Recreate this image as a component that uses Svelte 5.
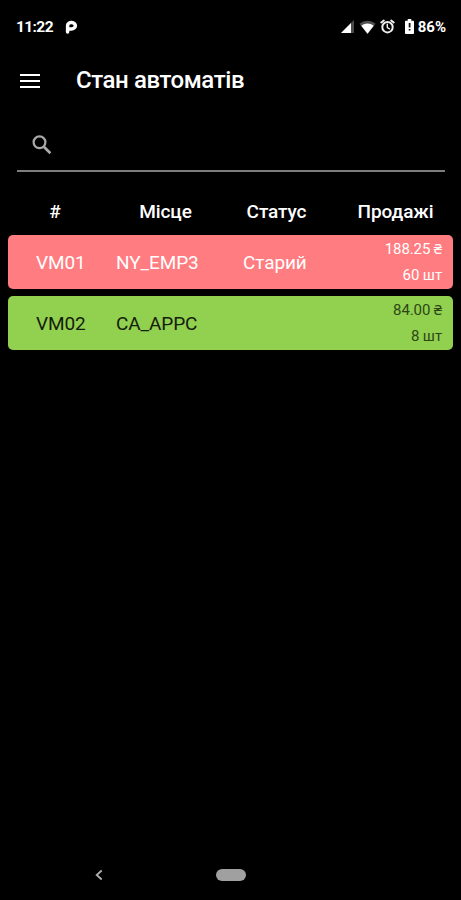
<script>
  let search = $state('');

  const columns = ['#', 'Місце', 'Статус', 'Продажі'];

  const machines = [
    { id: 'VM01', place: 'NY_EMP3', status: 'Старий', total: '188.25 ₴', count: '60 шт', type: 'old' },
    { id: 'VM02', place: 'CA_APPC', status: '', total: '84.00 ₴', count: '8 шт', type: 'ok' }
  ];

  let visible = $derived(
    machines.filter((m) => (m.id + m.place).toLowerCase().includes(search.toLowerCase()))
  );
</script>

<div class="screen">
  <div class="status-bar">
    <span class="time">11:22</span>
    <svg class="app-icon" width="13" height="14" viewBox="0 0 13 14">
      <path d="M2.600 12V5.400a3.900 3.200 0 1 1 3.900 3.500H4.500" fill="none" stroke="#fff" stroke-width="3.500" stroke-linecap="round" />
    </svg>
    <div class="indicators">
      <svg width="14" height="13" viewBox="0 0 14 13">
        <path d="M14 0v13H1z" fill="#4a4a4a" />
        <path d="M11 3V13H1z" fill="#fff" />
      </svg>
      <svg class="wifi" width="17" height="14" viewBox="0 0 17 14">
        <path d="M0.500 3.700a12 12 0 0 1 16 0L8.500 14z" fill="#505050" />
        <path d="M2.300 5.800a9.500 9.500 0 0 1 12.400 0L8.500 13.800z" fill="#fff" />
      </svg>
      <svg class="alarm" width="15" height="15" viewBox="0 0 15 15" fill="none" stroke="#eee" stroke-linecap="round">
        <circle cx="7.500" cy="8.200" r="5.200" stroke-width="2" />
        <path d="M1.300 3.500l2.500-2M13.700 3.500l-2.500-2" stroke-width="2" />
        <path d="M7.300 5.300v3.200l2.200 1.300" stroke-width="1.400" />
      </svg>
      <svg class="battery" width="9" height="15" viewBox="0 0 9 15">
        <path d="M2.700 0h3.600v1.700H8.200q.8 0 .8.800v11.700q0 .8-.8.800H.8q-.8 0-.8-.8V2.500q0-.8.800-.8h1.900z" fill="#fff" />
        <path d="M3.700 4h1.800v4.500H3.700zM3.700 10h1.800v1.600H3.700z" fill="#111" />
      </svg>
      <span class="percent">86%</span>
    </div>
  </div>

  <header class="toolbar">
    <button type="button" class="menu" aria-label="Меню">
      <span></span>
      <span></span>
      <span></span>
    </button>
    <h1>Стан автоматів</h1>
  </header>

  <label class="search">
    <svg width="20" height="20" viewBox="0 0 20 20" fill="none" stroke="#a9a9a9">
      <circle cx="7.500" cy="7.300" r="5.900" stroke-width="2.200" />
      <path d="M11.800 11.700l6.600 6.600" stroke-width="2.700" />
    </svg>
    <input type="text" aria-label="Пошук" bind:value={search} />
  </label>

  <div class="table-head">
    {#each columns as column}
      <span>{column}</span>
    {/each}
  </div>

  <main class="list">
    {#each visible as machine (machine.id)}
      <div class="machine {machine.type}">
        <span>{machine.id}</span>
        <span class="place">{machine.place}</span>
        <span class="status">{machine.status}</span>
        <div class="sales">
          <span>{machine.total}</span>
          <span>{machine.count}</span>
        </div>
      </div>
    {/each}
  </main>

  <nav class="nav-bar">
    <svg class="back" width="8" height="12" viewBox="0 0 8 12">
      <path d="M6.700 1.500L1.700 6l5 4.500" fill="none" stroke="#b0b0b0" stroke-width="1.800" />
    </svg>
    <span class="home"></span>
  </nav>
</div>

<style>
  :global(body) {
    margin: 0;
    background: #000;
  }

  .screen {
    display: flex;
    flex-direction: column;
    width: 100%;
    height: 100vh;
    overflow: hidden;
    background: #000;
    color: #fff;
    font-family: Roboto, 'Noto Sans', sans-serif;
  }

  .status-bar {
    display: flex;
    align-items: center;
    flex: none;
    height: 53px;
    padding: 0 15px 0 16px;
    box-sizing: border-box;
    font-weight: 700;
  }

  .time {
    width: 49px;
    font-size: 15.5px;
    letter-spacing: -0.6px;
  }

  .indicators {
    display: flex;
    align-items: center;
    margin-left: auto;
  }

  .wifi {
    margin-left: 5px;
  }

  .alarm {
    margin-left: 4px;
  }

  .battery {
    margin: 0 4px 0 10px;
  }

  .percent {
    font-size: 15px;
  }

  .toolbar {
    display: flex;
    align-items: center;
    flex: none;
    height: 56px;
    padding-left: 20px;
  }

  .menu {
    display: flex;
    flex-direction: column;
    justify-content: space-between;
    width: 20px;
    height: 14px;
    padding: 0;
    border: none;
    background: none;
  }

  .menu span {
    height: 2px;
    background: #fff;
  }

  h1 {
    margin: 0 0 2px 36px;
    font-size: 24px;
    font-weight: 500;
    letter-spacing: -0.42px;
  }

  .search {
    display: flex;
    align-items: center;
    flex: none;
    height: 63px;
    margin: 0 16px 0 17px;
    padding: 10px 0 0 15px;
    box-sizing: border-box;
    border-bottom: 2px solid #7d7d7d;
  }

  input {
    flex: 1;
    margin-left: 12px;
    border: none;
    outline: none;
    background: none;
    color: #fff;
    font: inherit;
    font-size: 18px;
  }

  .table-head {
    display: grid;
    grid-template-columns: 110px 111px 111px 127px;
    align-items: center;
    flex: none;
    height: 63px;
    padding-top: 15px;
    box-sizing: border-box;
    font-size: 19px;
    font-weight: 500;
    letter-spacing: -0.1px;
    text-align: center;
  }

  .list {
    display: flex;
    flex-direction: column;
    flex: 1;
    gap: 7px;
    padding: 0 8px;
  }

  .machine {
    display: grid;
    grid-template-columns: 80px 127px 1fr 110px;
    align-items: center;
    height: 54px;
    padding: 0 11px 0 28px;
    box-sizing: border-box;
    border-radius: 5px;
    font-size: 19px;
    letter-spacing: -0.1px;
  }

  .old {
    background: #ff7c80;
  }

  .ok {
    background: #92d050;
    color: #14200a;
  }

  .sales {
    display: flex;
    flex-direction: column;
    align-items: flex-end;
    font-size: 15px;
    line-height: 26px;
  }

  .ok .sales {
    color: #2c4714;
  }

  .nav-bar {
    display: flex;
    align-items: center;
    flex: none;
    height: 50px;
    padding-left: 95px;
  }

  .home {
    width: 30px;
    height: 12px;
    margin-left: 113px;
    border-radius: 6px;
    background: #a0a0a0;
  }
</style>
